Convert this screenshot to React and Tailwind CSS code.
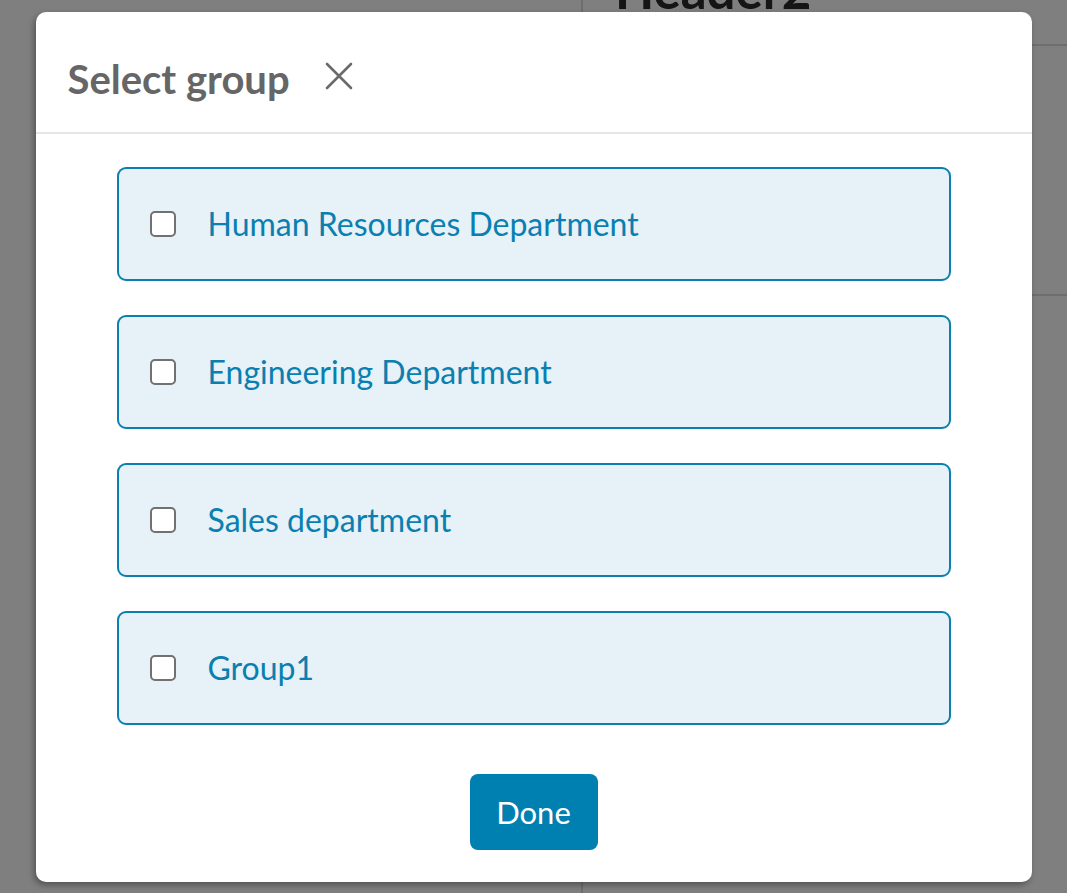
import React, { useState } from "react";

const groups = [
  "Human Resources Department",
  "Engineering Department",
  "Sales department",
  "Group1",
];

const CloseIcon = () => (
  <svg width="30" height="30" viewBox="0 0 30 30" fill="none">
    <path
      d="M3 3L27 27M27 3L3 27"
      stroke="#6b6b6b"
      strokeWidth="2.6"
      strokeLinecap="round"
    />
  </svg>
);

const GroupRow = ({ name, checked, onToggle }) => (
  <label className="flex items-center h-[114px] border-2 border-[#0a7fb0] bg-[#e6f1f8] rounded-[9px] pl-[31px] cursor-pointer">
    <span
      onClick={onToggle}
      className={`w-[26px] h-[26px] rounded-[5px] border-2 border-[#717171] shrink-0 ${
        checked ? "bg-[#0080b0]" : "bg-white"
      }`}
    />
    <span className="ml-[32px] text-[32px] text-[#0a7fb0] leading-none">
      {name}
    </span>
  </label>
);

const App = () => {
  const [selected, setSelected] = useState([]);

  const toggle = (name) => {
    setSelected((prev) =>
      prev.includes(name) ? prev.filter((n) => n !== name) : [...prev, name]
    );
  };

  return (
    <div
      className="relative w-[1067px] h-[893px] overflow-hidden bg-white"
      style={{ fontFamily: "Lato, 'Open Sans', sans-serif" }}
    >
      {/* page behind the dialog */}
      <div className="flex h-full">
        <div className="w-[583px] border-r-2 border-[#dcdcdc]" />
        <div className="flex-1 flex flex-col">
          <div className="h-[46px] border-b-2 border-[#dcdcdc] relative overflow-hidden">
            <h1 className="absolute left-[32px] top-[-36px] text-[51px] font-bold text-[#2a2a2a] leading-none">
              Header2
            </h1>
          </div>
          <div className="h-[250px] border-b-2 border-[#dcdcdc]" />
        </div>
      </div>

      {/* overlay */}
      <div className="absolute inset-0 bg-black/50 flex justify-center pt-[12px]">
        <div className="w-[996px] h-[870px] bg-white rounded-[10px] shadow-[-2px_3px_6px_rgba(0,0,0,0.35)] flex flex-col">
          <div className="h-[122px] border-b-2 border-[#e6e6e6] flex items-center pl-[32px] pt-[13px]">
            <h2 className="text-[40px] font-bold text-[#666666] leading-none">
              Select group
            </h2>
            <button className="ml-[34px] mt-[-6px]">
              <CloseIcon />
            </button>
          </div>
          <div className="flex flex-col gap-[34px] px-[81px] pt-[33px]">
            {groups.map((g) => (
              <GroupRow
                key={g}
                name={g}
                checked={selected.includes(g)}
                onToggle={() => toggle(g)}
              />
            ))}
          </div>
          <div className="flex justify-center mt-[49px]">
            <button className="w-[128px] h-[76px] bg-[#0080b0] rounded-[8px] text-white text-[31px]">
              Done
            </button>
          </div>
        </div>
      </div>
    </div>
  );
};

export default App;
